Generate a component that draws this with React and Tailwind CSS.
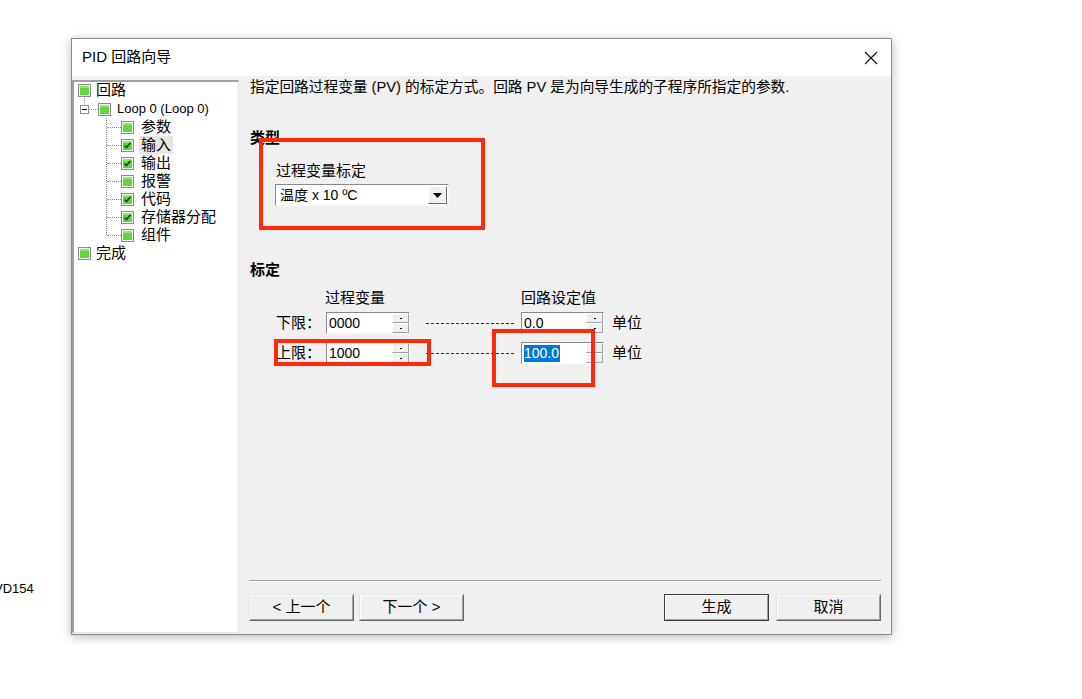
import React from "react";

const font = "font-['Liberation_Sans','Noto_Sans_CJK_SC',sans-serif]";

// Green tree state icon, optionally with a check mark
const StateIcon = ({ checked }) => (
  <svg width="13" height="13" viewBox="0 0 13 13" className="shrink-0">
    <rect x="0.5" y="0.5" width="12" height="12" fill="#f4f4f4" stroke="#8c8c8c" />
    <rect x="2" y="2" width="9" height="9" fill="#5ed83c" />
    <rect x="2" y="2" width="9" height="2" fill="#8fea6e" />
    {checked && (
      <path d="M3.5 6.5 L5.5 8.5 L9.5 3.8" fill="none" stroke="#0e4d06" strokeWidth="1.6" />
    )}
  </svg>
);

const Minus = () => (
  <svg width="9" height="9" viewBox="0 0 9 9" className="shrink-0">
    <rect x="0.5" y="0.5" width="8" height="8" fill="#fff" stroke="#8c8c8c" />
    <path d="M2 4.5 H7" stroke="#000" />
  </svg>
);

const children = [
  { label: "参数", checked: false },
  { label: "输入", checked: true, selected: true },
  { label: "输出", checked: true },
  { label: "报警", checked: false },
  { label: "代码", checked: true },
  { label: "存储器分配", checked: true },
  { label: "组件", checked: false },
];

const Tree = () => (
  <div className="w-[167px] mt-[4px] mb-[1px] bg-white border-t-2 border-l-2 border-t-[#a0a0a0] border-l-[#a0a0a0] border-r border-b border-r-[#e3e3e3] border-b-[#e3e3e3] text-[15px] text-black">
    {/* 回路 */}
    <div className="relative -mt-[1px] h-[18px] flex items-center pl-[4px]">
      <StateIcon />
      <span className="ml-[5px]">回路</span>
      <div className="absolute left-[10px] top-[15px] h-[7px] border-l border-dotted border-[#888]" />
    </div>
    {/* Loop 0 */}
    <div className="h-[18px] mt-[1px] flex items-center pl-[6px]">
      <Minus />
      <div className="w-[9px] border-t border-dotted border-[#888]" />
      <StateIcon />
      <span className="ml-[6px] text-[13px]">Loop 0 (Loop 0)</span>
    </div>
    {/* children */}
    <div className="relative">
      <div className="absolute left-[32px] top-0 h-[117px] border-l border-dotted border-[#888]" />
      {children.map((c) => (
        <div key={c.label} className="h-[18px] flex items-center pl-[33px]">
          <div className="w-[14px] border-t border-dotted border-[#888]" />
          <StateIcon checked={c.checked} />
          <span className={`ml-[5px] px-[2px] leading-[18px] ${c.selected ? "bg-[#e6e6e6]" : ""}`}>
            {c.label}
          </span>
        </div>
      ))}
    </div>
    {/* 完成 */}
    <div className="h-[18px] flex items-center pl-[4px]">
      <StateIcon />
      <span className="ml-[5px]">完成</span>
    </div>
  </div>
);

const Spin = ({ value, selected, width }) => (
  <div className={`${width} h-[22px] flex bg-white border-t border-l border-t-[#8a8a8a] border-l-[#8a8a8a] border-b border-r border-b-[#f8f8f8] border-r-[#f8f8f8]`}>
    <div className="flex-1 flex items-center pl-[2px] text-[14px]">
      {selected ? (
        <span className="bg-[#0078d7] text-white leading-[17px] pr-[1px]">{value}</span>
      ) : (
        <span>{value}</span>
      )}
    </div>
    <div className="w-[17px] flex flex-col">
      {[0, 1].map((i) => (
        <div
          key={i}
          className="flex-1 flex items-center justify-center bg-[#f0f0f0] border-t border-l border-t-white border-l-white border-b border-r border-b-[#a0a0a0] border-r-[#a0a0a0]"
        >
          {!selected && <div className="w-[2px] h-[1px] bg-black" />}
        </div>
      ))}
    </div>
  </div>
);

const Button = ({ children, primary }) => (
  <div
    className={`w-[105px] h-[27px] flex items-center justify-center text-[15px] bg-[#f0f0f0] ${
      primary ? "border border-[#3c3c3c]" : "border border-t-[#e3e3e3] border-l-[#e3e3e3] border-b-[#696969] border-r-[#696969]"
    }`}
  >
    <div className="w-full h-full flex items-center justify-center border border-t-white border-l-white border-b-[#a0a0a0] border-r-[#a0a0a0]">
      {children}
    </div>
  </div>
);

const Row = ({ label, low, high, selected }) => (
  <div className="flex items-center h-[22px]">
    <span className="ml-[26px] w-[50px]">{label}</span>
    <Spin value={low} width="w-[84px]" />
    <div className="ml-[16px] w-[88px] border-t border-dashed border-[#333]" />
    <div className="ml-[7px]">
      <Spin value={high} selected={selected} width="w-[83px]" />
    </div>
    <span className="ml-[8px]">单位</span>
  </div>
);

export default function App() {
  return (
    <div className={`relative min-h-[699px] w-[1082px] bg-white overflow-hidden ${font}`}>
      {/* text left on the page behind the dialog */}
      <span className="absolute left-[-6px] top-[579px] text-[13px] text-black">VD154</span>

      <div className="relative ml-[71px] mt-[38px] w-[821px] h-[597px] flex flex-col bg-[#f0f0f0] border border-[#8a8a8a] shadow-[0_2px_10px_rgba(0,0,0,0.28)]">
        {/* Title bar */}
        <div className="h-[37px] bg-white flex items-center justify-between pl-[10px] pr-[13px]">
          <span className="text-[15px] text-black">PID 回路向导</span>
          <svg width="14" height="14" viewBox="0 0 14 14">
            <path d="M1 1 L13 13 M13 1 L1 13" stroke="#111" strokeWidth="1.1" />
          </svg>
        </div>

        {/* Body */}
        <div className="flex-1 flex">
          <Tree />

          <div className="relative flex-1 flex flex-col pl-[10px] pr-[10px] text-[15px] text-black">
            <p className="mt-[3px] ml-[1px] h-[16px] leading-[16px] text-[14.7px]">
              指定回路过程变量 (PV) 的标定方式。回路 PV 是为向导生成的子程序所指定的参数.
            </p>

            <p className="mt-[35px] ml-[1px] h-[16px] leading-[16px] font-bold">类型</p>
            <p className="mt-[17px] ml-[27px] h-[16px] leading-[16px]">过程变量标定</p>
            <div className="mt-[5px] ml-[26px] w-[174px] h-[22px] flex items-center bg-white border-t border-l border-t-[#8a8a8a] border-l-[#8a8a8a] border-b border-r border-b-[#f8f8f8] border-r-[#f8f8f8]">
              <span className="flex-1 pl-[4px] text-[14px]">温度 x 10 ºC</span>
              <div className="w-[19px] h-[18px] mr-[1px] flex items-center justify-center bg-[#f0f0f0] border border-t-white border-l-white border-b-[#696969] border-r-[#696969]">
                <svg width="9" height="5" viewBox="0 0 9 5">
                  <path d="M0 0 H9 L4.5 5 Z" fill="#000" />
                </svg>
              </div>
            </div>

            <p className="mt-[56px] ml-[1px] h-[16px] leading-[16px] font-bold">标定</p>
            <div className="mt-[12px] h-[16px] leading-[16px] flex">
              <span className="ml-[76px] w-[196px]">过程变量</span>
              <span>回路设定值</span>
            </div>
            <div className="mt-[6px] ml-[1px]">
              <Row label="下限：" low="0000" high="0.0" />
            </div>
            <div className="mt-[8px] ml-[1px]">
              <Row label="上限：" low="1000" high="100.0" selected />
            </div>

            <div className="flex-1" />
            <div className="border-t border-t-[#a0a0a0] border-b border-b-white" />
            <div className="mt-[12px] mb-[13px] flex">
              <Button>&lt; 上一个</Button>
              <div className="ml-[5px]">
                <Button>下一个 &gt;</Button>
              </div>
              <div className="flex-1" />
              <Button primary>生成</Button>
              <div className="ml-[7px]">
                <Button>取消</Button>
              </div>
            </div>

            {/* Red annotation frames */}
            <div className="absolute left-[20px] top-[62px] w-[226px] h-[92px] border-[4px] border-[#ff2a0a]" />
            <div className="absolute left-[35px] top-[263px] w-[157px] h-[27px] border-[4px] border-[#ff2a0a]" />
            <div className="absolute left-[253px] top-[253px] w-[103px] h-[58px] border-[4px] border-[#ff2a0a]" />
          </div>
        </div>
      </div>
    </div>
  );
}
